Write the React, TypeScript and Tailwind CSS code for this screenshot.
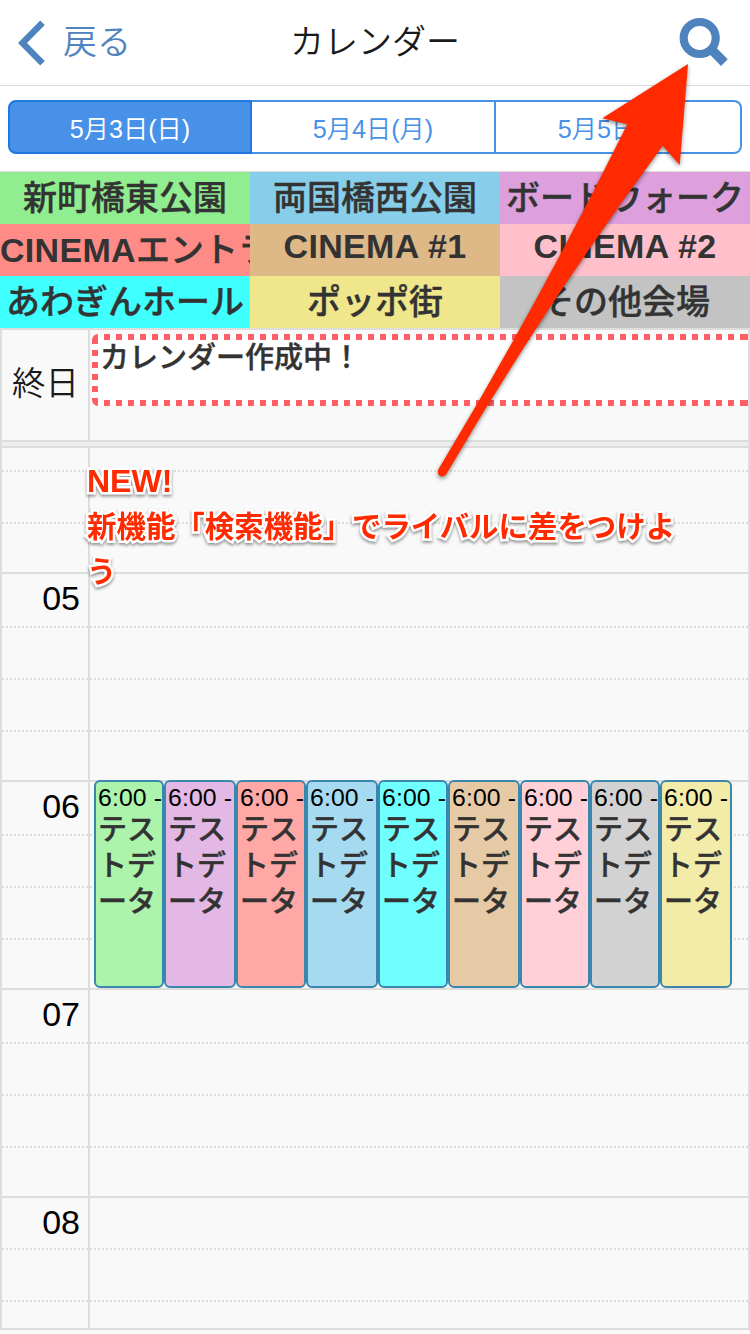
const sans = "font-['Liberation_Sans','Noto_Sans_CJK_JP',sans-serif]";
const semi = 'font-medium [-webkit-text-stroke:0.4px_#333333]';

const days = ['5月3日(日)', '5月4日(月)', '5月5日(火)'];

const venues = [
  { latin: '', name: '新町橋東公園', cls: 'bg-[#90ee90] justify-center leading-[52px]' },
  { latin: '', name: '両国橋西公園', cls: 'bg-[#87ceeb] justify-center leading-[52px]' },
  { latin: '', name: 'ボードウォーク', cls: 'bg-[#dda0dd] justify-center leading-[52px]' },
  { latin: 'CINEMA', name: 'エントランス', cls: 'bg-[#ff8b87] justify-start leading-[52px]' },
  { latin: 'CINEMA #1', name: '', cls: 'bg-[#deb887] justify-center leading-[44px]' },
  { latin: 'CINEMA #2', name: '', cls: 'bg-[#ffc0cb] justify-center leading-[44px]' },
  { latin: '', name: 'あわぎんホール', cls: 'bg-[#40ffff] justify-center leading-[52px]' },
  { latin: '', name: 'ポッポ街', cls: 'bg-[#f0e68c] justify-center leading-[52px]' },
  { latin: '', name: 'その他会場', cls: 'bg-[#c3c3c3] justify-center leading-[52px]' },
];

const solid = 'border-t-2 border-solid';
const dotted = 'border-t-2 border-dotted';

const slots = [
  { line: '', h: 'h-[22px]' },
  { line: dotted, h: 'h-[52px]' },
  { line: dotted, h: 'h-[50px]' },
  { line: solid, h: 'h-[54px]', hour: '05' },
  { line: dotted, h: 'h-[52px]' },
  { line: dotted, h: 'h-[52px]' },
  { line: dotted, h: 'h-[50px]' },
  { line: solid, h: 'h-[54px]', hour: '06' },
  { line: dotted, h: 'h-[52px]' },
  { line: dotted, h: 'h-[52px]' },
  { line: dotted, h: 'h-[50px]' },
  { line: solid, h: 'h-[54px]', hour: '07' },
  { line: dotted, h: 'h-[52px]' },
  { line: dotted, h: 'h-[52px]' },
  { line: dotted, h: 'h-[50px]' },
  { line: solid, h: 'h-[52px]', hour: '08' },
  { line: dotted, h: 'h-[52px]' },
  { line: dotted, h: 'h-[28px]' },
];

const events = [
  'w-[70px] bg-[#acf3ac]',
  'w-[72px] bg-[#e4b8e4]',
  'w-[70px] bg-[#ffa8a5]',
  'w-[72px] bg-[#a5daf0]',
  'w-[70px] bg-[#70ffff]',
  'w-[72px] bg-[#e6caa5]',
  'w-[70px] bg-[#ffd0d8]',
  'w-[70px] bg-[#d2d2d2]',
  'w-[72px] bg-[#f3eca9]',
];

function Header() {
  return (
    <header className="flex h-[86px] items-start justify-between border-b border-[#d9dadc] pr-[22px] pl-[18px]">
      <div className="flex w-[244px] items-start text-[#4f83bd]">
        <svg className="mt-5 h-[46px] w-[28px]" viewBox="0 0 28 46" fill="none" stroke="currentColor" strokeWidth="6.4">
          <path d="M24.5 2.8 L4.5 23 L24.5 43.2" />
        </svg>
        <span className="ml-[17px] text-[34px] leading-[84px] font-[350]">戻る</span>
      </div>
      <h1 className="text-[34px] leading-[84px] font-[350] text-[#1a1a1a]">カレンダー</h1>
      <div className="flex w-[240px] justify-end text-[#4f83bd]">
        <svg className="mt-[17px] h-[50px] w-[50px]" viewBox="0 0 50 50" fill="none" stroke="currentColor">
          <circle cx="21.7" cy="21" r="16" strokeWidth="8.2" />
          <path d="M31.5 30.5 L46.4 45.6" strokeWidth="9.5" />
        </svg>
      </div>
    </header>
  );
}

function DayTabs() {
  return (
    <nav className="mx-2 mt-[14px] flex h-[54px] text-[25.2px] leading-[50px] font-[350] text-[#4891e8]">
      <div className="flex w-[244px] justify-center rounded-l-[8px] border-2 border-[#1e78df] bg-[#4891e8] pt-[2px] text-white">{days[0]}</div>
      <div className="flex w-[244px] justify-center border-y-2 border-r-2 border-[#4891e8] pt-[2px]">{days[1]}</div>
      <div className="flex w-[246px] justify-center rounded-r-[8px] border-y-2 border-r-2 border-[#4891e8] pt-[2px]">{days[2]}</div>
    </nav>
  );
}

function VenueLegend() {
  return (
    <section className="mt-[17px] grid grid-cols-3 border-t border-[#dddddd] text-[34px] text-[#333333]">
      {venues.map((v) => (
        <div key={v.latin + v.name} className={`flex h-[52px] overflow-hidden whitespace-nowrap ${v.cls}`}>
          {v.latin && <span className="font-bold tracking-[0.3px]">{v.latin}</span>}
          {v.name && <span className={semi}>{v.name}</span>}
        </div>
      ))}
    </section>
  );
}

function DottedFrame() {
  const squares = Array.from({ length: 53 }, (_, i) => 12 + i * 12);
  const sides = [16, 28, 40, 52];
  return (
    <svg className="absolute top-0 left-0 h-[72px] w-[656px]" viewBox="0 0 656 72" fill="#ff5f64">
      <path d="M0 10 V6 A6 6 0 0 1 6 0 V10 Z M0 64 V66 A6 6 0 0 0 6 72 V64 Z" />
      {squares.map((x) => (
        <g key={x}>
          <rect x={x} y="0" width="6" height="6" />
          <rect x={x} y="66" width="6" height="6" />
        </g>
      ))}
      <path d="M648 0 H656 V6 H648 Z M648 66 H656 V72 H648 Z" />
      {sides.map((y) => (
        <rect key={y} x="0" y={y} width="6" height="6" />
      ))}
    </svg>
  );
}

function AllDayRow() {
  return (
    <section className="flex h-[114px] border-2 border-[#dddddd] bg-[#f9f9f9]">
      <div className="w-[88px] border-r-2 border-[#dddddd] pl-px text-center text-[33.5px] leading-[108px] font-[350] text-[#1a1a1a]">終日</div>
      <div className="flex-1 overflow-hidden pt-1 pl-[2px]">
        <div className="relative h-[72px] rounded-l-[6px] bg-white pl-2">
          <DottedFrame />
          <div className={`text-[29px] leading-[48px] text-[#333333] ${semi}`}>カレンダー作成中！</div>
        </div>
      </div>
    </section>
  );
}

function TimeGrid() {
  return (
    <section className="relative border-2 border-[#dddddd] bg-[#f9f9f9]">
      {slots.map((s, i) => (
        <div key={i} className={`flex ${s.h}`}>
          <div className={`w-[86px] border-[#dddddd] pr-2 text-right text-[34px] leading-[48px] text-black ${s.line}`}>{s.hour}</div>
          <div className="w-[2px] bg-[#dddddd]" />
          <div className={`flex-1 border-[#dddddd] ${s.line}`} />
        </div>
      ))}
      <div className="absolute top-[332px] left-[92px] flex">
        {events.map((cls) => (
          <article key={cls} className={`h-[208px] overflow-hidden rounded-[6px] border-2 border-[#3a87ad] pl-[2px] ${cls}`}>
            <div className="h-[30px] text-[24.8px] leading-[32px] tracking-[0.1px] whitespace-nowrap text-black">6:00 -</div>
            <div className={`w-[60px] text-[29px] leading-[36px] break-all text-[#333333] ${semi}`}>テストデータ</div>
          </article>
        ))}
      </div>
    </section>
  );
}

function Callout() {
  return (
    <>
      <svg className="absolute top-0 left-0 h-[500px] w-[750px] drop-shadow-[0_2px_2px_rgba(0,0,0,0.45)]" viewBox="0 0 750 500" fill="#ff2a00">
        <path d="M688 64 L602.3 118.3 L627.3 124.3 Q540 301 438 470 Q437 475 441 476.5 Q445 477 447 473 Q546 304 662.7 145.7 L679.7 165 Z" />
      </svg>
      <div className="absolute top-[459px] left-[87px] w-[600px] text-[29.45px] leading-[45px] font-bold text-[#ff2a00] [paint-order:stroke_fill] drop-shadow-[0_2px_1.5px_rgba(0,0,0,0.4)] [-webkit-text-stroke:5px_white]">
        <div className="h-[45px] text-[32px]">NEW!</div>
        <div className="h-[45px] whitespace-nowrap">新機能「検索機能」でライバルに差をつけよ</div>
        <div className="h-[45px]">う</div>
      </div>
    </>
  );
}

export default function App() {
  return (
    <main className={`relative h-[1334px] w-[750px] overflow-hidden bg-white ${sans}`}>
      <Header />
      <DayTabs />
      <VenueLegend />
      <AllDayRow />
      <div className="h-1 border-x-2 border-[#dddddd] bg-[#eeeeee]" />
      <TimeGrid />
      <div className="h-1 bg-[#f9f9f9]" />
      <Callout />
    </main>
  );
}
